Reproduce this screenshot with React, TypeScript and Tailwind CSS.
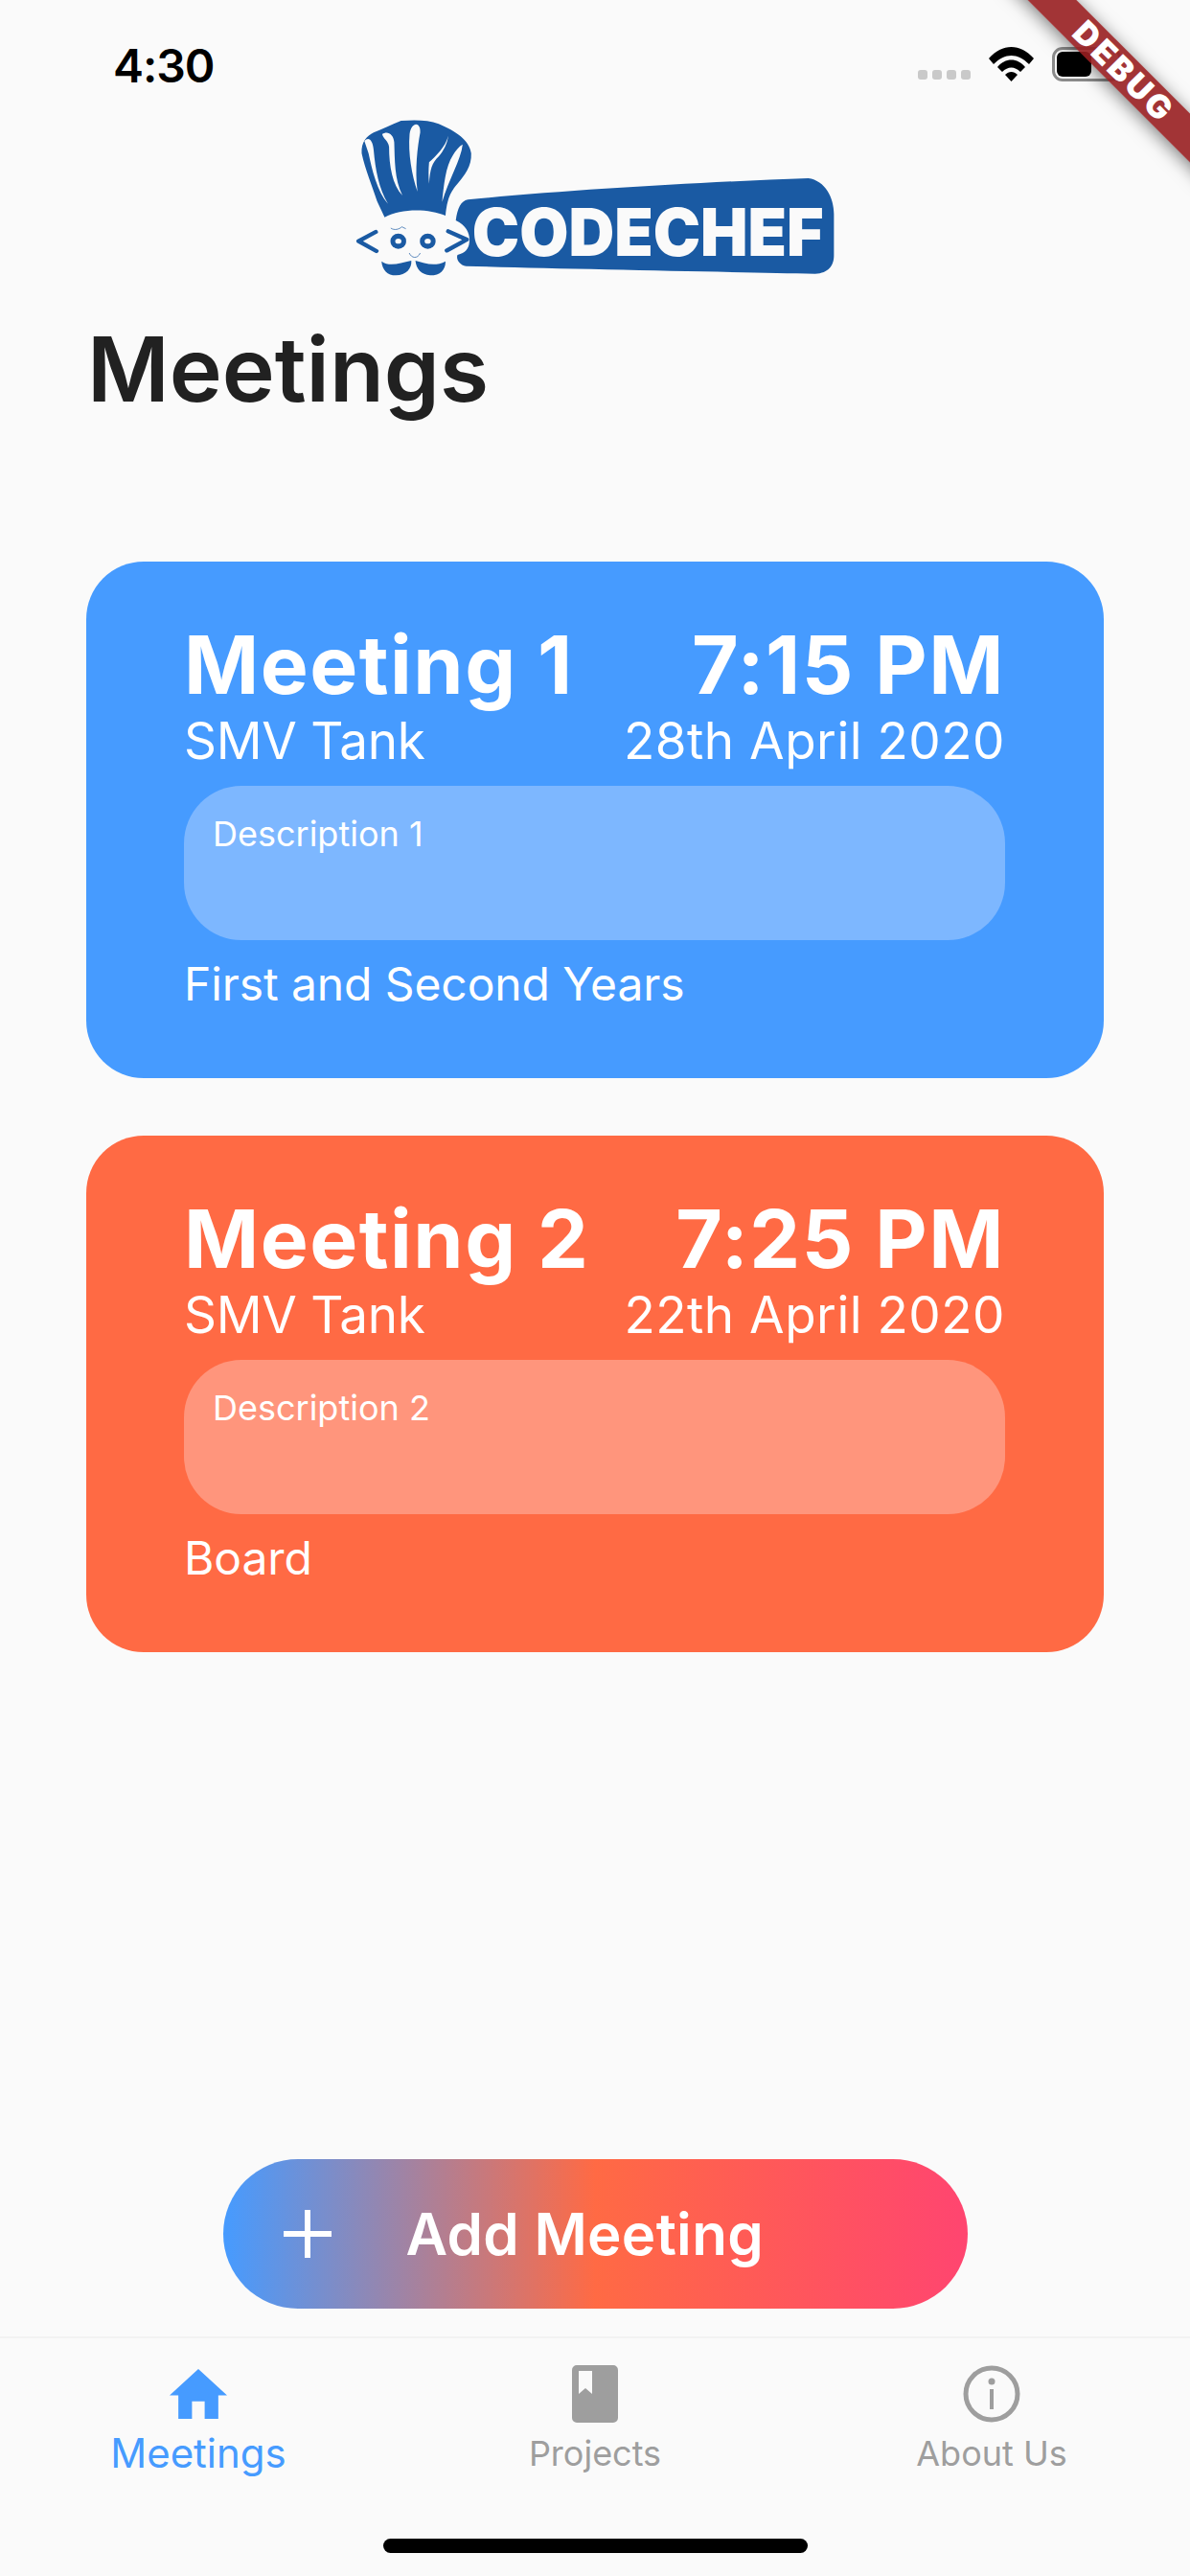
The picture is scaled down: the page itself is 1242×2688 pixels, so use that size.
const meetings = [
  { title: "Meeting 1", time: "7:15 PM", place: "SMV Tank", date: "28th April 2020", desc: "Description 1", who: "First and Second Years", card: "bg-[#469bff]", box: "bg-[#7db7ff]" },
  { title: "Meeting 2", time: "7:25 PM", place: "SMV Tank", date: "22th April 2020", desc: "Description 2", who: "Board", card: "bg-[#ff6a44]", box: "bg-[#ff957c]" },
];

// logo is drawn in zoomed units, stretched to 560x190
function Logo() {
  const blue = "#1a5aa3";
  return (
    <svg width="560" height="190" viewBox="0 0 1568 570" preserveAspectRatio="none" className="block">
      <path fill={blue} d="M172 350 L150 300 C135 250 115 200 105 150 C103 115 120 95 140 85 C165 75 190 60 220 48 C260 45 300 45 330 58 C380 80 420 110 425 150 C427 190 405 220 385 245 C365 270 355 290 350 345 C300 322 220 322 172 350 Z" />
      <path fill="#fafafa" d="M113 112 C125 95 138 110 140 140 C145 200 155 260 182 308 C150 270 135 200 125 150 Z" />
      <path fill="#fafafa" d="M165 90 C180 78 198 90 200 115 C202 170 200 230 224 282 C195 250 185 190 185 130 C183 110 168 105 165 90 Z" />
      <path fill="#fafafa" d="M245 90 C250 50 278 50 276 85 C268 130 260 200 268 270 C252 220 240 150 245 90 Z" />
      <path fill="#fafafa" d="M358 95 C350 130 320 160 302 178 C300 200 300 225 302 245 C305 200 310 180 330 160 C345 140 355 120 358 95 Z" />
      <path fill="#fafafa" d="M400 122 C395 170 360 230 340 302 C345 250 350 190 372 155 C380 140 390 128 400 122 Z" />
      <path fill={blue} d="M415 295 C700 265 1100 240 1410 228 C1460 235 1485 290 1485 340 L1485 470 C1485 500 1470 525 1430 527 C1200 522 700 512 410 503 C390 500 380 480 385 468 C415 460 420 440 420 420 C420 400 410 375 380 360 C385 320 395 300 415 295 Z" />
      <text x="428" y="470" fontSize="206" fontWeight="900" fill="#fafafa" fontFamily="Inter, sans-serif" textLength="1027" lengthAdjust="spacingAndGlyphs">CODECHEF</text>
      <path fill="none" stroke={blue} strokeWidth="13" strokeLinecap="round" strokeLinejoin="round" d="M146 396 L96 425 L148 456 M358 394 L412 420 L354 454" />
      <ellipse cx="212" cy="425" rx="23" ry="24" fill={blue} />
      <ellipse cx="212" cy="425" rx="9" ry="8" fill="#fafafa" />
      <ellipse cx="298" cy="425" rx="23" ry="24" fill={blue} />
      <ellipse cx="298" cy="425" rx="9" ry="8" fill="#fafafa" />
      <path fill={blue} d="M163 488 C185 505 215 495 250 486 C252 510 235 532 205 532 C180 532 165 515 163 488 Z" />
      <path fill={blue} d="M262 486 C290 495 320 505 350 488 C350 515 335 532 305 532 C280 530 264 512 262 486 Z" />
      <path fill="none" stroke={blue} strokeWidth="2" d="M190 384 C200 392 215 388 222 380 L234 386 M244 462 C250 478 268 482 276 462" />
    </svg>
  );
}

function StatusBar() {
  return (
    <div className="h-[124px] flex justify-between items-start pl-[118px] pr-[72px] pt-[43px]">
      <span className="text-[48px] leading-[52px] font-semibold tracking-[-1px] text-black">4:30</span>
      <div className="flex items-end pt-[6px]">
        <div className="flex gap-[5px] mb-[2px]">
          {[0, 1, 2, 3].map((d) => (
            <div key={d} className="w-[10px] h-[10px] rounded-[3px] bg-[#c9c9c9]" />
          ))}
        </div>
        <svg className="ml-[19px]" width="47" height="36" viewBox="0 0 47 36">
          <path d="M0 12 C14 -4 33 -4 47 12 L42 18 C30 6 17 6 5 18 Z" />
          <path d="M9 21 C17 11 30 11 38 21 L33 26 C27 20 20 20 14 26 Z" />
          <path d="M17 29 C21 25 26 25 30 29 L23.5 36 Z" />
        </svg>
        <div className="ml-[19px] w-[72px] h-[36px] rounded-[11px] border-[3px] border-[#8a8a8a] p-[2px]">
          <div className="w-[36px] h-full rounded-[6px] bg-black" />
        </div>
      </div>
    </div>
  );
}

function MeetingCard({ m }: { m: (typeof meetings)[number] }) {
  return (
    <div className={`h-[539px] rounded-[60px] pl-[102px] pr-[103px] pt-[64px] text-white ${m.card}`}>
      <div className="flex justify-between items-baseline h-[88px] text-[84px] leading-[88px] font-bold tracking-[1.5px]">
        <span>{m.title}</span>
        <span>{m.time}</span>
      </div>
      <div className="flex justify-between items-baseline h-[58px] mt-[6px] text-[53px] leading-[58px]">
        <span className="tracking-[-0.3px]">{m.place}</span>
        <span className="tracking-[0.5px]">{m.date}</span>
      </div>
      <div className={`mt-[18px] h-[161px] rounded-[60px] pl-[30px] pt-[28px] text-[36px] leading-[44px] ${m.box}`}>
        {m.desc}
      </div>
      <div className="mt-[17px] text-[48px] leading-[58px] tracking-[-0.1px]">{m.who}</div>
    </div>
  );
}

function TabBar() {
  return (
    <div className="h-[250px] border-t-[2px] border-[#f2f2f2] relative">
      <div className="grid grid-cols-3 pt-[28px]">
        <div className="flex flex-col items-center text-[#469bff]">
          <svg width="60" height="52" viewBox="0 0 59 51" className="mt-[4px]" fill="currentColor">
            <path d="M29.5 0 L59 27 L50 27 L50 51 L36 51 L36 33 L23 33 L23 51 L9 51 L9 27 L0 27 Z" />
          </svg>
          <span className="text-[42px] leading-[50px] mt-[11px]">Meetings</span>
        </div>
        <div className="flex flex-col items-center text-[#9e9e9e]">
          <svg width="48" height="60" viewBox="0 0 48 60" fill="currentColor">
            <path fillRule="evenodd" d="M5 0 H43 A5 5 0 0 1 48 5 V55 A5 5 0 0 1 43 60 H5 A5 5 0 0 1 0 55 V5 A5 5 0 0 1 5 0 Z M7 6 V30 L14 24 L21 30 V6 Z" />
          </svg>
          <span className="text-[36px] leading-[44px] mt-[10px]">Projects</span>
        </div>
        <div className="flex flex-col items-center text-[#9e9e9e]">
          <svg width="60" height="60" viewBox="0 0 60 60" fill="currentColor">
            <circle cx="30" cy="30" r="27" fill="none" stroke="currentColor" strokeWidth="5" />
            <circle cx="30" cy="17" r="3.5" />
            <rect x="28" y="25" width="4" height="21" />
          </svg>
          <span className="text-[36px] leading-[44px] mt-[10px]">About Us</span>
        </div>
      </div>
      <div className="absolute left-[400px] bottom-[24px] w-[443px] h-[15px] rounded-full bg-black" />
    </div>
  );
}

export default function App() {
  return (
    <div className="relative w-[1242px] h-[2688px] overflow-hidden flex flex-col bg-[#fafafa] text-[#212121] font-['Inter',sans-serif]">
      <StatusBar />
      <div className="pl-[340px] -mt-[14px] h-[190px]">
        <Logo />
      </div>
      <h1 className="pl-[91px] mt-[35px] text-[93px] leading-[100px] font-semibold">Meetings</h1>
      <div className="mt-[151px] mx-[90px] flex flex-col gap-[60px]">
        {meetings.map((m) => (
          <MeetingCard key={m.title} m={m} />
        ))}
      </div>
      <div className="flex-1 flex items-end justify-center pb-[29px]">
        <button className="w-[777px] h-[156px] rounded-full flex items-center pl-[62px] text-white bg-[linear-gradient(90deg,#469bff_0%,#ff6a44_50%,#ff4570_100%)]">
          <svg width="52" height="52" viewBox="0 0 52 52" stroke="currentColor" strokeWidth="6">
            <path d="M26 1 V51 M1 26 H51" />
          </svg>
          <span className="ml-[77px] text-[60px] leading-[70px] font-semibold tracking-[0.3px]">Add Meeting</span>
        </button>
      </div>
      <TabBar />
      {/* debug ribbon */}
      <div className="absolute left-[970px] top-[54px] w-[400px] h-[36px] rotate-45 bg-[#981e20]/90 shadow-[0_3px_18px_rgba(0,0,0,0.5)] pl-[8px] text-white text-[34px] leading-[36px] font-black text-center tracking-[3px]">
        DEBUG
      </div>
    </div>
  );
}
